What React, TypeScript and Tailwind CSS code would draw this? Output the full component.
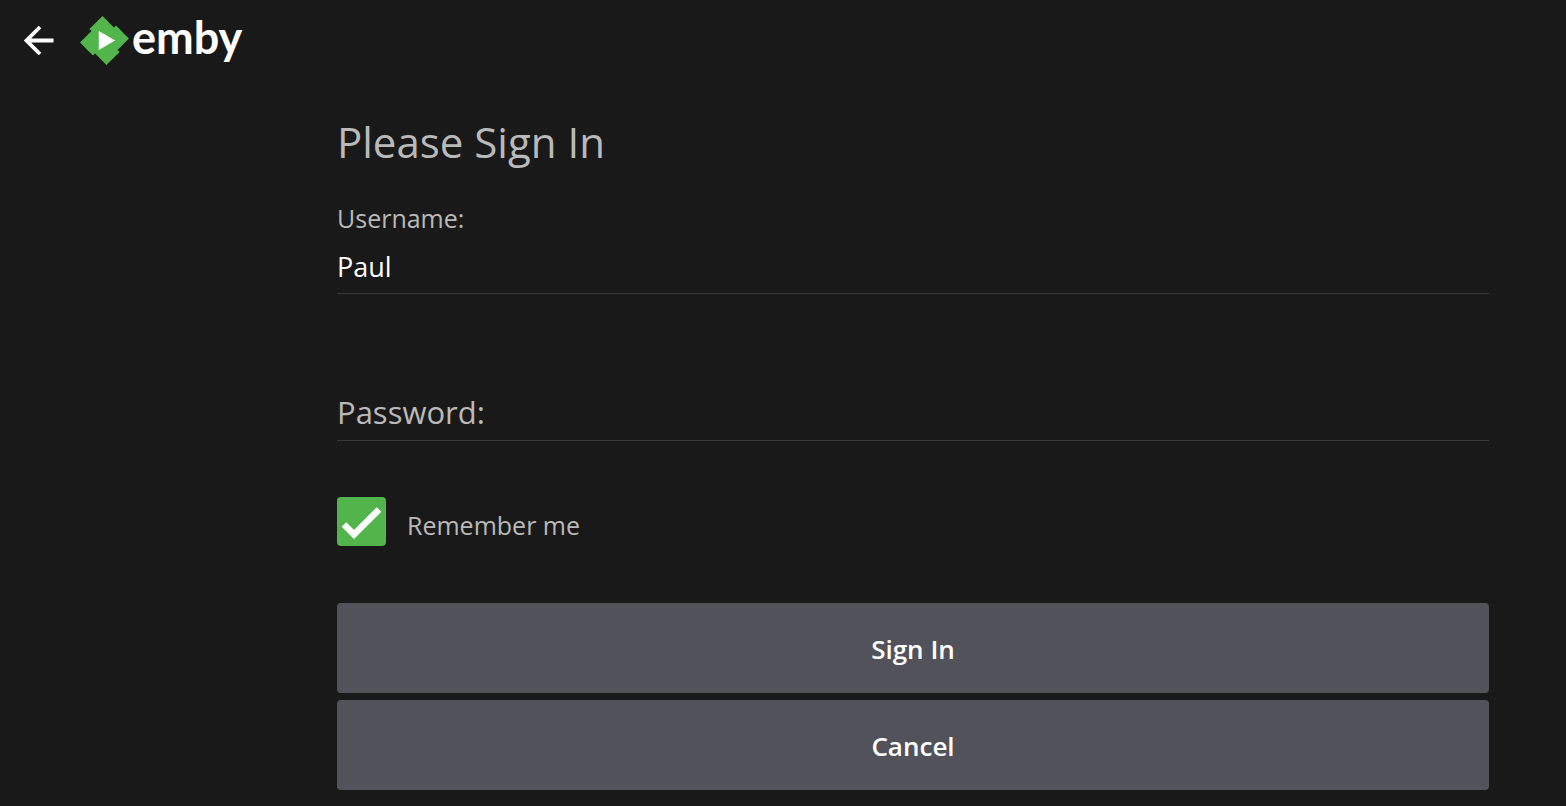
import { useState } from 'react';

function BackIcon() {
  return (
    <svg viewBox="0 0 30 30" className="size-[30px]" fill="none" stroke="currentColor" strokeWidth="3.8" aria-hidden="true">
      <path d="M29.5 15.5H3M16 2 2.5 15.5 16 29" />
    </svg>
  );
}

function EmbyMark() {
  return (
    <svg viewBox="0 0 24 24" className="size-[49px]" aria-hidden="true">
      <path d="M8.5 6.5h9.5v11H8.5z" fill="#fff" />
      <path
        fill="#52b54b"
        d="M11.041 0c-.007 0-1.456 1.43-3.219 3.176L4.615 6.352l.512.513.512.512-2.819 2.791L0 12.961l1.83 1.848c1.006 1.016 2.438 2.46 3.182 3.209l1.351 1.359.508-.496c.28-.273.515-.498.524-.498.008 0 1.266 1.264 2.794 2.808L12.97 24l.187-.182c.23-.225 5.007-4.95 5.717-5.656l.52-.516-.502-.513c-.276-.282-.5-.52-.496-.53.003-.009 1.264-1.26 2.802-2.783 1.538-1.522 2.8-2.776 2.803-2.785.005-.012-3.617-3.684-6.107-6.193L17.65 4.6l-.505.505c-.279.278-.517.501-.53.497-.013-.005-1.27-1.267-2.793-2.805A449.655 449.655 0 0011.041 0zM9.223 7.367c.091.038 7.951 4.608 7.957 4.627.003.013-1.781 1.056-3.965 2.32a999.898 999.898 0 01-3.996 2.307c-.019.006-.026-1.266-.026-4.629 0-3.7.007-4.634.03-4.625Z"
      />
    </svg>
  );
}

const buttonClass = 'h-[90px] w-full rounded-sm bg-[#52525b] pt-0.5 text-[26px] font-semibold text-white';
const inputClass = 'block h-[58px] w-full border-b border-[#393939] bg-transparent pt-[3px] text-[27px] text-white outline-none';

export default function App() {
  const [username, setUsername] = useState('Paul');
  const [password, setPassword] = useState('');
  const [remember, setRemember] = useState(true);

  return (
    <div className="min-h-screen bg-[#191919] font-['Open_Sans',sans-serif] text-[#b9b9b9]">
      <header className="flex h-20 items-center gap-[26px] pl-6 text-white">
        <button type="button" aria-label="Back">
          <BackIcon />
        </button>
        <div className="flex items-center gap-[3px]">
          <EmbyMark />
          <span className="pb-1.5 font-['Lato',sans-serif] text-[45px] leading-none font-bold">emby</span>
        </div>
      </header>

      <main className="pr-[77px] pb-4 pl-[337px]">
        <form onSubmit={(e) => e.preventDefault()}>
          <h1 className="pt-8 text-[42px] leading-[60px]">Please Sign In</h1>

          <div className="pt-7">
            <label htmlFor="username" className="block text-[25px] leading-9">
              Username:
            </label>
            <input
              id="username"
              type="text"
              className={inputClass}
              value={username}
              onChange={(e) => setUsername(e.target.value)}
            />
          </div>

          <div className="pt-[89px]">
            <input
              id="password"
              type="password"
              aria-label="Password:"
              placeholder="Password:"
              className={`${inputClass} placeholder:text-[31px] placeholder:text-[#b9b9b9]`}
              value={password}
              onChange={(e) => setPassword(e.target.value)}
            />
          </div>

          <label className="mt-14 flex w-fit items-center gap-[21px]">
            <span className="grid">
              <input
                type="checkbox"
                className="col-start-1 row-start-1 size-[49px] appearance-none rounded-sm border-2 border-[#b9b9b9] checked:border-[#52b54b] checked:bg-[#52b54b]"
                checked={remember}
                onChange={(e) => setRemember(e.target.checked)}
              />
              {remember && (
                <svg
                  viewBox="0 0 49 49"
                  className="pointer-events-none col-start-1 row-start-1 size-[49px]"
                  fill="none"
                  stroke="#fff"
                  strokeWidth="6.5"
                  aria-hidden="true"
                >
                  <path d="M7 27.5 17 37.5 42 12.5" />
                </svg>
              )}
            </span>
            <span className="pt-1.5 text-[25px] leading-9">Remember me</span>
          </label>

          <div className="flex flex-col gap-[7px] pt-[57px]">
            <button type="submit" className={buttonClass}>
              Sign In
            </button>
            <button type="button" className={buttonClass}>
              Cancel
            </button>
          </div>
        </form>
      </main>
    </div>
  );
}
